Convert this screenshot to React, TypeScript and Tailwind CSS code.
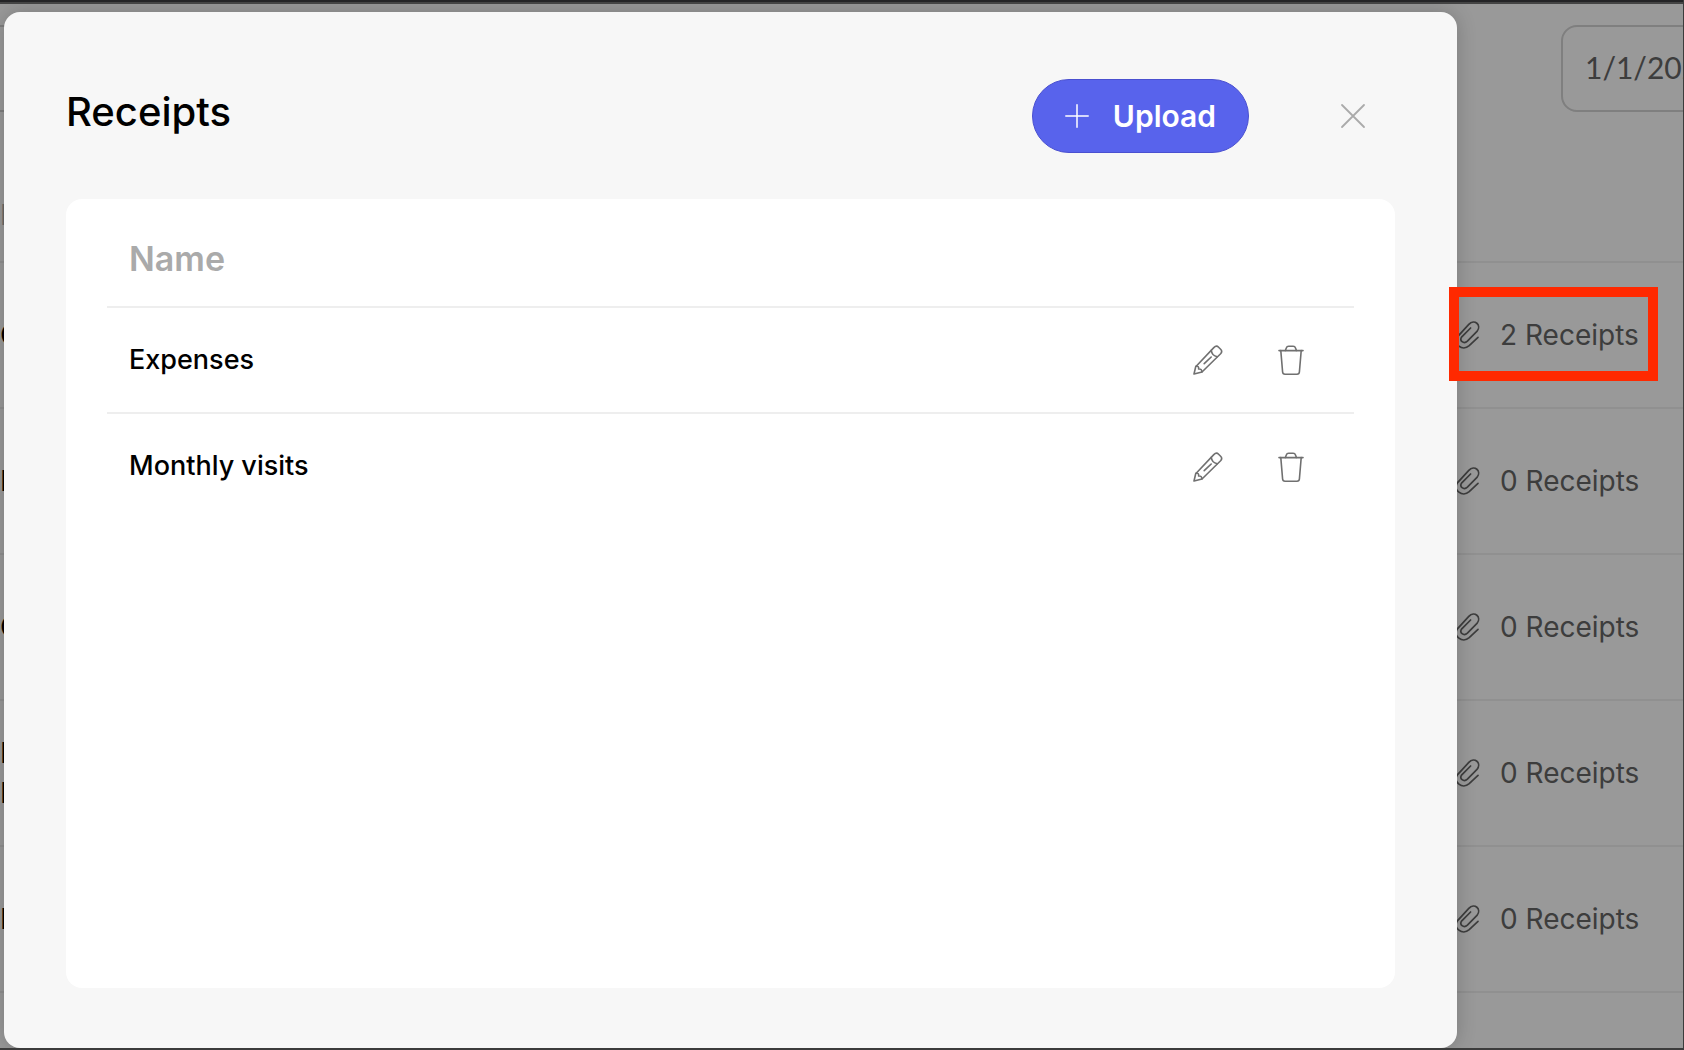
import React, { useState } from 'react'

interface IReceipt {
  id: number
  name: string
}

interface IEntry {
  id: number
  initials: string[]
  receipts: number
}

const RECEIPTS: IReceipt[] = [
  { id: 1, name: 'Expenses' },
  { id: 2, name: 'Monthly visits' },
]

const ENTRIES: IEntry[] = [
  { id: 1, initials: ['C'], receipts: 2 },
  { id: 2, initials: ['L'], receipts: 0 },
  { id: 3, initials: ['C'], receipts: 0 },
  { id: 4, initials: ['L', 'L'], receipts: 0 },
  { id: 5, initials: ['M'], receipts: 0 },
]

function PencilIcon() {
  return (
    <svg width="30" height="30" viewBox="0 0 30 30" fill="none" stroke="currentColor" strokeWidth="1.6" strokeLinecap="round" strokeLinejoin="round">
      <path d="M1 29L2.7 21.7L20.8 2.6C22.2 1.2 24.2 0.8 25.6 2.2L27.6 4.2C29 5.6 28.8 7.4 27.6 8.7L9 27L1 29Z" />
      <path d="M2.9 21.3C5.2 21 6 22 5.6 24C7.8 23.8 8.9 24.6 8.9 26.9" />
      <path d="M18.3 5.3C18.6 8.6 20.8 11.2 24.3 11.7" />
      <path d="M11.2 18.6L18.2 12" />
    </svg>
  )
}

function TrashIcon() {
  return (
    <svg width="26" height="30" viewBox="0 0 26 30" fill="none" stroke="currentColor" strokeWidth="1.6" strokeLinecap="round" strokeLinejoin="round">
      <path d="M1 5.6H25" />
      <path d="M2.8 5.6L4.6 27C4.7 28.5 5.6 29.2 7 29.2H19C20.4 29.2 21.3 28.5 21.4 27L23.2 5.6" />
      <path d="M7.4 5.4L8.2 3.2C8.7 1.8 9.4 1.3 10.6 1.3H15.2C16.4 1.3 17.1 1.8 17.6 3.2L18.4 5.4" />
    </svg>
  )
}

function PaperclipIcon() {
  return (
    <svg width="26" height="30" viewBox="0 0 26 30" fill="none" stroke="currentColor" strokeWidth="1.7" strokeLinecap="round" strokeLinejoin="round" className="shrink-0">
      <path d="M24 17.4L15.2 25.7C8.6 31.6 -1.8 24 3.6 16.6L14.8 4.4C20.4 -1.6 28 5 23 11.4L13.4 21.2C9.8 24.4 4.6 20.6 7.8 16.8L16.6 8" />
    </svg>
  )
}

function EntriesTable() {
  return (
    <table className="w-full table-fixed text-left">
      <thead>
        <tr className="h-[150px] border-b-2 border-[#f0f0f0]">
          <th className="pt-14 font-normal text-[#b0b0b0]">N</th>
          <th className="w-[229px]"></th>
        </tr>
      </thead>
      <tbody>
        {ENTRIES.map((entry) => (
          <tr key={entry.id} className="h-[146px] border-b-2 border-[#f0f0f0]">
            <td className="leading-10 text-black">
              {entry.initials.map((line, i) => (
                <div key={i}>{line}</div>
              ))}
            </td>
            <td>
              <a href="#receipts" className="flex items-center gap-5 whitespace-nowrap text-[#666]">
                <PaperclipIcon />
                {entry.receipts} Receipts
              </a>
            </td>
          </tr>
        ))}
      </tbody>
    </table>
  )
}

function App() {
  const [receipts, setReceipts] = useState<IReceipt[]>(RECEIPTS)
  const [open, setOpen] = useState(true)

  const removeReceipt = (id: number) => {
    setReceipts(receipts.filter((r) => r.id !== id))
  }

  return (
    <div className="flex h-screen flex-col border-r border-b-2 border-[#3c3c3c] bg-white font-['Inter','Liberation_Sans',sans-serif] text-[28px]">
      <div className="h-1 shrink-0 border-b-2 border-[#444] bg-[#242426]"></div>

      <div className="relative min-h-0 flex-1 overflow-hidden">
        {/* Page */}
        <main>
          <div className="flex justify-between pt-[21px]">
            <div className="h-[87px] w-40 border-y-2 border-[#d4d4d4]"></div>
            <div className="h-[87px] w-[122px] overflow-hidden">
              <input
                type="text"
                aria-label="Start date"
                defaultValue="1/1/2022"
                className="h-full w-60 rounded-2xl border-2 border-[#d4d4d4] px-[22px] pb-1 font-['Lato',sans-serif] text-[30px] text-[#666]"
              />
            </div>
          </div>
          <EntriesTable />
        </main>

        {/* Modal */}
        {open && (
          <div className="absolute inset-0 flex bg-black/40 pt-2 pr-[226px] pl-1">
            <section
              role="dialog"
              aria-labelledby="receipts-title"
              className="flex flex-1 flex-col rounded-2xl bg-[#f7f7f7] px-[62px] pb-[60px] shadow-[0_0_20px_rgba(0,0,0,0.2)]"
            >
              <header className="flex items-center pt-[67px] pb-[46px]">
                <h1 id="receipts-title" className="flex-1 pb-2 text-[40px] leading-none font-medium text-black">
                  Receipts
                </h1>
                <button className="flex h-[74px] items-center gap-6 rounded-full border border-[#4a50d0] bg-[#5863ec] px-8 text-[30px] font-semibold text-white">
                  <svg width="24" height="24" viewBox="0 0 24 24" stroke="currentColor" strokeWidth="1.5" strokeLinecap="round">
                    <path d="M12 0.8V23.2M0.8 12H23.2" />
                  </svg>
                  Upload
                </button>
                <button aria-label="Close" onClick={() => setOpen(false)} className="mr-[29px] ml-[91px] text-[#aaa]">
                  <svg width="26" height="26" viewBox="0 0 26 26" stroke="currentColor" strokeWidth="1.8" strokeLinecap="round">
                    <path d="M2 2L24 24M24 2L2 24" />
                  </svg>
                </button>
              </header>

              <div className="flex-1 rounded-2xl bg-white px-[41px] pt-3">
                <table className="w-full text-left">
                  <thead>
                    <tr className="h-24 border-b-2 border-[#eee]">
                      <th className="pl-[22px] text-[34px] font-semibold text-[#aaa]">Name</th>
                      <th></th>
                    </tr>
                  </thead>
                  <tbody>
                    {receipts.map((receipt) => (
                      <tr key={receipt.id} className="h-[106px] border-b-2 border-[#eee] last:border-0">
                        <td className="pl-[22px] text-[27px] font-medium text-black">{receipt.name}</td>
                        <td className="pr-[50px]">
                          <div className="flex items-center justify-end gap-[55px] text-[#707070]">
                            <button aria-label={'Edit ' + receipt.name}>
                              <PencilIcon />
                            </button>
                            <button aria-label={'Delete ' + receipt.name} onClick={() => removeReceipt(receipt.id)}>
                              <TrashIcon />
                            </button>
                          </div>
                        </td>
                      </tr>
                    ))}
                  </tbody>
                </table>
              </div>
            </section>
          </div>
        )}

        {/* Highlight around the selected entry */}
        <div className="pointer-events-none absolute top-[283px] right-[25px] h-[94px] w-[209px] border-10 border-[#ff2900]"></div>
      </div>
    </div>
  )
}

export default App
